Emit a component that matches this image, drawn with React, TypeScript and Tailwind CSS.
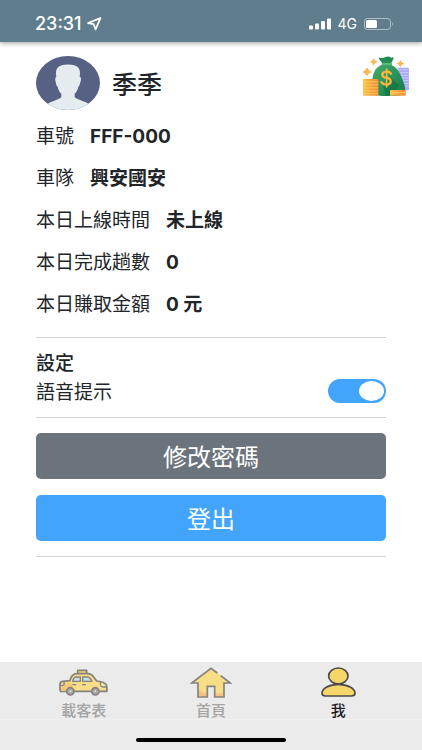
import { useState, type ReactNode } from 'react';
import clsx from 'clsx';

const stats = [
  { label: '車號', value: 'FFF-000' },
  { label: '車隊', value: '興安國安' },
  { label: '本日上線時間', value: '未上線' },
  { label: '本日完成趟數', value: '0' },
  { label: '本日賺取金額', value: '0 元' },
];

function StatusBar() {
  return (
    <header className="flex h-[42px] items-center justify-between bg-[#607d8d] pt-1.5 pr-7 pl-[35px] text-white shadow-[0_1px_5px_rgba(0,0,0,0.4)]">
      <div className="flex items-center gap-1">
        <span className="font-['Inter',sans-serif] text-lg font-medium">23:31</span>
        <svg className="h-3.5 w-4" viewBox="0 0 16 14" fill="none" stroke="currentColor" strokeWidth="1.8" strokeLinejoin="round">
          <path d="M14.4 1.2 L2 6 L7.6 7.2 L9.6 12.4 Z" />
        </svg>
      </div>
      <div className="flex items-center gap-[7px]">
        <svg className="h-3 w-[22px]" viewBox="0 0 22 12" fill="currentColor">
          <rect x="0" y="7.5" width="4" height="4" rx="1" />
          <rect x="6" y="5.5" width="4" height="6" rx="1" />
          <rect x="12" y="3" width="4" height="8.5" rx="1" />
          <rect x="18" y="0.5" width="4" height="11" rx="1" />
        </svg>
        <span className="font-['Inter',sans-serif] text-sm">4G</span>
        <svg className="h-3 w-[30px]" viewBox="0 0 30 12">
          <rect x="0.5" y="0.5" width="26" height="11" rx="3" fill="none" stroke="#fff" strokeOpacity="0.5" />
          <rect x="2" y="2" width="11" height="8" rx="1.5" fill="#fff" />
          <path d="M28 4 Q29.6 6 28 8 Z" fill="#fff" fillOpacity="0.6" />
        </svg>
      </div>
    </header>
  );
}

function Avatar() {
  return (
    <svg className="h-[54px] w-16" viewBox="0 0 192 160" preserveAspectRatio="none">
      <defs>
        <clipPath id="avatar-clip">
          <ellipse cx="96" cy="80" rx="96" ry="80" />
        </clipPath>
      </defs>
      <g clipPath="url(#avatar-clip)">
        <rect width="192" height="160" fill="#566183" />
        <path
          d="M61 62 C56 36 66 26 96 25 C126 26 136 36 131 62 C136 62 136 70 133 78 C131 86 130 90 127 91 C125 102 120 108 116 112 L116 122 C130 132 158 136 164 148 L164 160 L28 160 L28 148 C36 136 62 132 76 122 L76 112 C72 108 67 102 65 91 C62 90 60 84 59 77 C57 69 57 62 61 62 Z"
          fill="#e4ecf0"
        />
      </g>
    </svg>
  );
}

function MoneyBag() {
  return (
    <svg className="h-10 w-[47px]" viewBox="0 2 141 118" preserveAspectRatio="none">
      <defs>
        <linearGradient id="bag" x1="0" y1="0" x2="1" y2="1">
          <stop offset="0" stopColor="#45ad6a" />
          <stop offset="1" stopColor="#147a4a" />
        </linearGradient>
        <linearGradient id="coins" x1="0" y1="0" x2="1" y2="0">
          <stop offset="0" stopColor="#fdc247" />
          <stop offset="1" stopColor="#f08a33" />
        </linearGradient>
      </defs>
      <rect x="104" y="37" width="34" height="66" rx="2" fill="#a9a8f5" />
      <path d="M104 43H138M104 51H138M104 59H138M104 67H138M104 75H138M104 83H138M104 91H138" stroke="#dedeff" strokeWidth="2" />
      <path
        d="M56 28 Q68 24 84 28 C108 38 114 60 124 86 Q132 112 114 118 Q72 124 34 117 Q20 110 27 78 C31 50 35 38 56 28 Z"
        fill="url(#bag)"
      />
      <path d="M82 64 L108 88 Q94 116 68 119 L60 91 Z" fill="#0c693f" opacity="0.5" />
      <path d="M50 7 Q60 10 67 5 Q77 1 85 7 Q91 4 92 9 L84 25 H59 L48 11 Q47 7 50 7 Z" fill="#218c55" />
      <rect x="56" y="22" width="31" height="7" rx="3" fill="#58b978" />
      <g fill="none" stroke="#f9b83d" strokeWidth="7" strokeLinecap="round">
        <path d="M84 54 Q79 47 70 48 Q58 49 58 57 Q58 64 70 66 Q84 69 83 78 Q82 86 70 86 Q60 86 55 79" />
        <path d="M71 41 V93" strokeWidth="5" />
      </g>
      <rect x="0" y="70" width="46" height="49" rx="2" fill="url(#coins)" />
      <path d="M0 78H46M0 87H46M0 96H46M0 105H46M0 113H46" stroke="#ffda70" strokeWidth="2" />
      <rect x="81" y="102" width="47" height="17" rx="2" fill="url(#coins)" />
      <path d="M84 110H126" stroke="#ffda70" strokeWidth="2" />
      <g fill="#fbb64f" stroke="#fbb64f" strokeWidth="3">
        <path d="M12 38 Q14 46 23 49 Q14 52 12 60 Q10 52 1 49 Q10 46 12 38Z" />
        <path d="M32 12 Q34 17 40 19 Q34 21 32 27 Q30 21 24 19 Q30 17 32 12Z" />
        <path d="M112 17 Q114 22 120 24 Q114 26 112 32 Q110 26 104 24 Q110 22 112 17Z" />
      </g>
    </svg>
  );
}

function TaxiIcon() {
  return (
    <svg className="h-[27px] w-[49px]" viewBox="0 0 147 81" stroke="#85827f" strokeWidth="5" strokeLinejoin="round" strokeLinecap="round">
      <path d="M56 15 V4 H83 V15" fill="#f6d36b" />
      <path
        d="M6 68 Q3 67 3 62 V45 Q3 38 12 37 L33 35 Q36 21 43 17 Q48 14 56 14 H87 Q97 14 104 24 L113 36 Q134 38 141 46 Q144 50 144 67 H6 Z"
        fill="#f7dd86"
      />
      <path d="M8 43 H33 Q39 43 40 50 V65 H6Z" fill="#f6c778" stroke="none" />
      <path d="M41 37 Q43 25 51 24 H64 V37 Z M71 24 H87 Q91 24 99 37 H71 Z" fill="#c7dde4" strokeWidth="4" />
      <path d="M42 47 H50 M71 47 H79" strokeWidth="4" />
      <path d="M4 49 H11 Q17 48 15 40 M125 40 Q121 52 133 54 H143" fill="#fae9be" strokeWidth="4" />
      <circle cx="34" cy="67" r="11" fill="#a9a6a5" />
      <circle cx="34" cy="67" r="3" fill="#dedddd" stroke="none" />
      <circle cx="109" cy="67" r="11" fill="#a9a6a5" />
      <circle cx="109" cy="67" r="3" fill="#dedddd" stroke="none" />
    </svg>
  );
}

function HomeIcon() {
  return (
    <svg className="h-[31px] w-[42px]" viewBox="0 0 126 93">
      <path d="M5 48 L63 4 L121 48 H102 V90 H74 V58 H52 V90 H24 V48 Z" fill="#f7dd86" />
      <path d="M24 48 Q24 74 42 77 L52 78 V90 H24 Z M74 78 Q88 82 102 76 V90 H74 Z" fill="#f6c282" />
      <path
        d="M82 18 L63 4 L5 48 H24 V90 H52 V58 H74 V90 H102 V48 H121 L92 26"
        fill="none"
        stroke="#85827f"
        strokeWidth="5"
      />
    </svg>
  );
}

function PersonIcon() {
  return (
    <svg className="h-[30px] w-[35px]" viewBox="0 0 105 90" fill="#f6d668" stroke="#4a4a4a" strokeWidth="5">
      <ellipse cx="52" cy="27" rx="29" ry="24" />
      <path d="M52 52 C80 52 102 65 102 79 Q102 87 91 87 H14 Q3 87 3 79 C3 65 25 52 52 52 Z" />
    </svg>
  );
}

const tabs: { label: string; icon: ReactNode; active?: boolean }[] = [
  { label: '載客表', icon: <TaxiIcon /> },
  { label: '首頁', icon: <HomeIcon /> },
  { label: '我', icon: <PersonIcon />, active: true },
];

function Divider() {
  return <hr className="border-[#d3d3d3]" />;
}

export default function App() {
  const [voice, setVoice] = useState(true);

  return (
    <div className="flex min-h-screen flex-col bg-white font-['Noto_Sans_CJK_TC',sans-serif] text-[#212529]">
      <StatusBar />

      <main className="flex-1 px-9 pt-3.5">
        <div className="-mr-6 flex items-start justify-between">
          <div className="flex items-center gap-3">
            <Avatar />
            <h1 className="text-[25px] leading-8 font-medium">季季</h1>
          </div>
          <MoneyBag />
        </div>

        <dl className="mt-1 mb-[13px] text-[19px] leading-[42px]">
          {stats.map((item) => (
            <div key={item.label} className="flex h-[42px] items-baseline gap-4">
              <dt>{item.label}</dt>
              <dd className="font-['Inter','Noto_Sans_CJK_TC',sans-serif] font-bold">{item.value}</dd>
            </div>
          ))}
        </dl>

        <Divider />
        <section className="pt-2.5 pb-3 text-[19px] leading-7">
          <h2 className="font-medium">設定</h2>
          <div className="flex h-[29px] items-center justify-between">
            <label htmlFor="voice">語音提示</label>
            <input
              id="voice"
              type="checkbox"
              role="switch"
              checked={voice}
              onChange={(e) => setVoice(e.target.checked)}
              className="flex h-6 w-[58px] cursor-pointer appearance-none items-center rounded-full bg-gray-300 px-0.5 before:h-5 before:w-[25px] before:rounded-[50%] before:bg-white checked:justify-end checked:bg-[#42a5fb]"
            />
          </div>
        </section>
        <Divider />

        <div className="flex flex-col gap-4 py-[15px] text-2xl text-white">
          <button type="button" className="h-[46px] rounded-[5px] bg-[#6b737d]">
            修改密碼
          </button>
          <button type="button" className="h-[46px] rounded-[5px] bg-[#42a5fb]">
            登出
          </button>
        </div>
        <Divider />
      </main>

      <footer className="bg-[#ebebeb]">
        <nav className="grid h-[58px] grid-cols-3 border-b border-[#f0f0f0] px-5">
          {tabs.map((tab) => (
            <a
              key={tab.label}
              href="#"
              className={clsx(
                'flex flex-col items-center text-[15px] leading-5 font-medium',
                tab.active ? 'text-[#1d1d24]' : 'text-[#a3a3a3]'
              )}
            >
              <span className="flex h-[38px] items-center pt-0.5">{tab.icon}</span>
              {tab.label}
            </a>
          ))}
        </nav>
        <div className="flex h-[30px] items-center justify-center pt-3 pb-0.5">
          <div className="h-1 w-[150px] rounded-full bg-black" />
        </div>
      </footer>
    </div>
  );
}
